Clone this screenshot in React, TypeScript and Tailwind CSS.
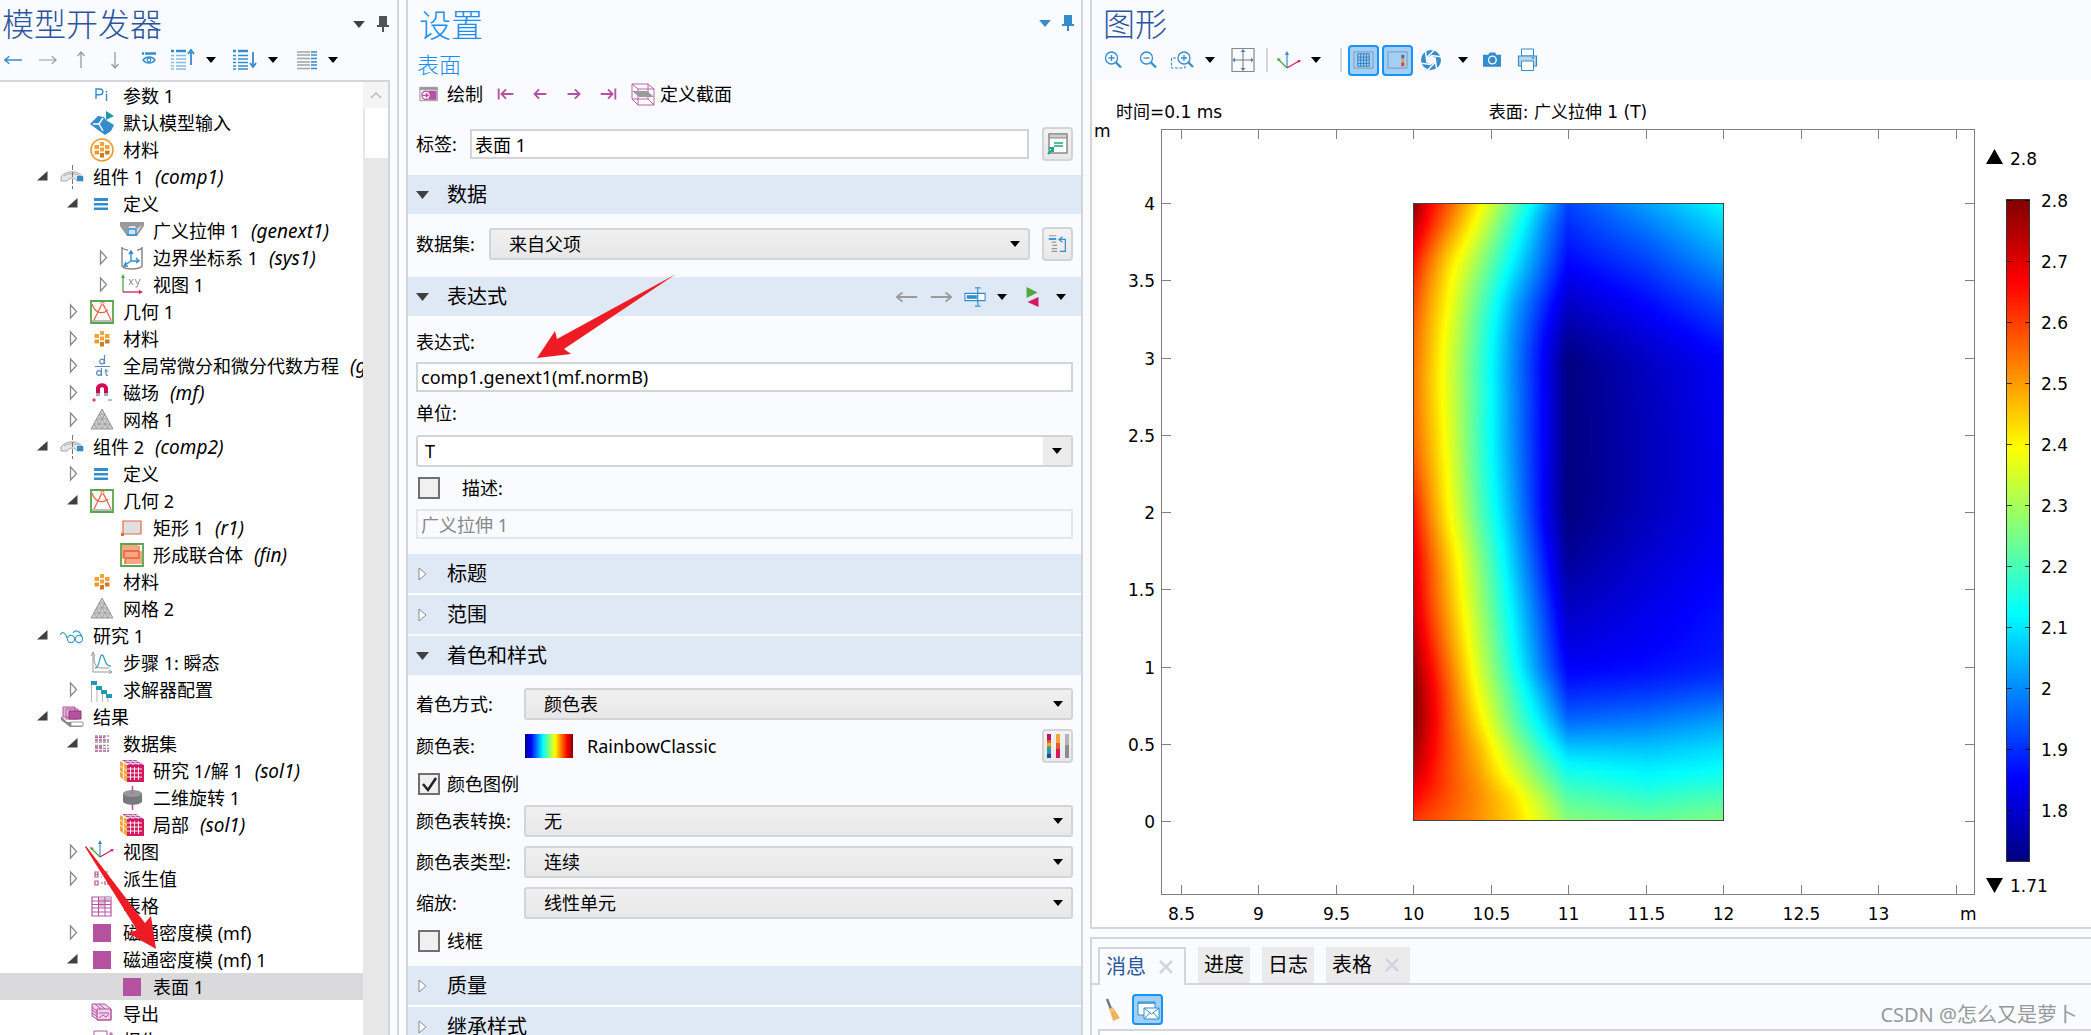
import { useState, type ReactNode } from "react";

type IconProps = { children: ReactNode; className?: string };

function Icon({ children, className = "size-6" }: IconProps) {
  return (
    <svg viewBox="0 0 24 24" fill="none" className={`shrink-0 ${className}`} aria-hidden>
      {children}
    </svg>
  );
}

const BLUE = "#338dcd";
const PURPLE = "#b5529f";
const PINK = "#d6185f";

function Caret({ color = "#000", large = false }: { color?: string; large?: boolean }) {
  return (
    <svg viewBox="0 0 10 6" className={large ? "h-[7px] w-3 shrink-0" : "h-[6px] w-[10px] shrink-0"} aria-hidden>
      <path d="M0 0h10L5 6z" fill={color} />
    </svg>
  );
}

function Pin({ color }: { color: string }) {
  return (
    <svg viewBox="0 0 12 16" className="h-4 w-3 shrink-0" aria-hidden>
      <path d="M2 0h8v9h2v2H7v5H5v-5H0V9h2z" fill={color} />
    </svg>
  );
}

// ---------- tree icons ----------

function MaterialDots() {
  return (
    <g>
      <path d="M4.500 7H9v4H4.500zM10 4h4v4h-4zM10 9.500h4v4h-4zM15 7h4.500v4H15z" fill="#f0a43a" />
      <path d="M4.500 12.500H9v4H4.500z" fill="#ee9b2e" />
      <path d="M10 15h4v4.500h-4zM15 12.500h4.500v4H15z" fill="#d07c1c" />
    </g>
  );
}

function Cube() {
  return (
    <>
      <path d="M0 2l7 4v17l-7-5z" fill="#f3a83f" />
      <path d="M0 7l7 5M0 12l7 5M3.500 4v16" stroke="#fff" strokeWidth=".8" />
      <path d="M2 1h14l8 5H9z" fill={PURPLE} />
      <path d="M5 2.500h14M7 4.500h14M7 1l7 5M12 1l7 5" stroke="#fff" strokeWidth=".6" />
      <path d="M7 6h17v17H7z" fill={PINK} />
      <path d="M7 10h15M7 14h15M7 18h15M10.500 8v13M14.500 8v13M18.500 8v13" stroke="#fff" strokeWidth=".9" />
    </>
  );
}

const TREE_ICONS: Record<string, ReactNode> = {
  params: (
    <>
      <path d="M6 15V5h4a2.800 2.800 0 0 1 0 5.700H6M16.500 10v7" stroke={BLUE} strokeWidth="1.400" />
      <path d="M15.700 7h1.600v1.600h-1.600z" fill={BLUE} />
    </>
  ),
  input: (
    <>
      <path d="M0 13l8-8 6 1 2 3 8 5-3 6-6 4-7-5z" fill={BLUE} />
      <path d="M3 13h6l4-6M9 13l4 7" stroke="#fff" strokeWidth="1.500" />
      <path d="M16 0l8 5-8 4z" fill="#1f9aa8" />
    </>
  ),
  materialRound: (
    <>
      <circle cx="12" cy="12" r="11" stroke="#ee9b2e" strokeWidth="1.600" />
      <MaterialDots />
    </>
  ),
  component: (
    <>
      <path d="M1 12c5-7 17-7 22 0v4h-6c-2-4-8-4-10 0H1z" fill="#e6e6e6" stroke="#aaa" />
      <path d="M4 11c4-3 12-3 16 0" stroke="#aaa" />
      <path d="M17 11h6v5h-6z" fill={BLUE} />
      <path d="M12.500 0v24" stroke="#777" strokeDasharray="5 2" />
    </>
  ),
  definitions: <path d="M4 6h14v3H4zM4 11h14v2.500H4zM4 15.500h14V18H4z" fill={BLUE} />,
  extrusion: (
    <>
      <path d="M0 3h24v4l-7 10H7L0 7z" fill="#9a9a9a" />
      <path d="M2 6l5 8v-4l3-3h5l2 3 5-4-5 8H7z" fill="#dfe3e6" />
      <path d="M8 10h8v6H8z" fill="#cfe4f5" stroke={BLUE} strokeWidth="1.400" />
    </>
  ),
  coords: (
    <>
      <path d="M2 1v19c3 4 17 4 20 0V1M2 2c3 2 6 2 6 2M22 2c-2 2-5 2-5 2" stroke="#8b8b8b" strokeWidth="1.500" />
      <path d="M11 6v9h8M11 15l-6 4M9 8l2-3 2 3M16 12l3 3-3 2M6 16l-2 4h4" stroke={BLUE} strokeWidth="1.400" />
    </>
  ),
  xy: (
    <>
      <path d="M3 19V4" stroke="#4aa44a" strokeWidth="1.300" />
      <path d="M1 5l2-4 2 4z" fill="#4aa44a" />
      <path d="M3 19h17" stroke={PINK} strokeWidth="1.300" />
      <path d="M19 17l4 2-4 2z" fill={PINK} />
      <path d="M9 6l4 6M13 6l-4 6M15 6l2.500 5M20 6l-3 8h-1.500" stroke="#8a8a8a" />
    </>
  ),
  geometry: (
    <>
      <path d="M1 1h22v22H1z" fill="#fff" stroke="#5aa54b" strokeWidth="1.800" />
      <path d="M2 21h20" stroke="#bbb" strokeWidth="2" />
      <path d="M4 20l8.500-17L21 20M2 4c3 9 10 11 16 6" stroke="#e2674a" strokeWidth="1.300" />
      <circle cx="12.500" cy="3.500" r="1.500" fill="#fff" stroke="#e2674a" />
    </>
  ),
  material: <MaterialDots />,
  ode: (
    <>
      <path d="M5 12.500h15" stroke="#5f8cba" />
      <circle cx="12" cy="7.500" r="2.300" stroke="#5f8cba" strokeWidth="1.200" />
      <circle cx="9" cy="19" r="2.300" stroke="#5f8cba" strokeWidth="1.200" />
      <path d="M14.500 1v9M11.500 14v8M16 15v5.500q0 1 2 1M14.500 17h4" stroke="#5f8cba" strokeWidth="1.200" />
    </>
  ),
  magnet: (
    <>
      <path d="M8 12V7a4.300 4.300 0 0 1 8 0v5" stroke="#d10a50" strokeWidth="4" />
      <path d="M6 12h4v3H6zM14 12h4v3h-4z" fill="#a8a8a8" />
      <path d="M2 19h4M4 17v4" stroke={PINK} />
      <path d="M18 19h4" stroke={BLUE} />
    </>
  ),
  mesh: (
    <>
      <path d="M12 1l11 20H1z" fill="#cdcdcd" stroke="#969696" />
      <path d="M9 6h6l-9 15M6 11h12l-6 10M4 16h16l-3 5M9 6l9 15M6 11l6 10M4 16l3 5M15 6l-3 5" stroke="#969696" strokeWidth=".7" />
    </>
  ),
  rect: (
    <>
      <path d="M3 5h18v13H3z" fill="#dde0de" stroke="#e8683c" strokeWidth="1.200" />
      <path d="M1 17h3v3H1z" fill="#e8683c" />
    </>
  ),
  union: (
    <>
      <path d="M1 1h22v22H1z" fill="#fff" stroke="#5aa54b" strokeWidth="1.800" />
      <path d="M2 2h16v14H2zM5 8h17v13H5z" fill="#f4a686" />
      <path d="M4 15V8h15M5 15h14V3M5 16v5" stroke="#e45f31" strokeWidth="1.300" />
    </>
  ),
  study: (
    <>
      <circle cx="11" cy="15" r="3.600" stroke="#39a3c2" strokeWidth="1.200" />
      <circle cx="19" cy="15" r="3.600" stroke="#39a3c2" strokeWidth="1.200" />
      <path d="M0 11c3-5 6-1 7 3M13 9c3-4 7-2 9 4" stroke="#39a3c2" strokeWidth="1.200" />
    </>
  ),
  transient: (
    <>
      <path d="M3 2v19h19M1 5l2-4 2 4M19 19l3 2-3 2M4 5c0 9 3 12 6 12h9" stroke="#999" />
      <path d="M5 17c5 0 4-13 7-13s2 12 9 11" stroke="#39a3c2" strokeWidth="1.300" />
    </>
  ),
  solver: (
    <>
      <path d="M1.500 5v19M7 8v16M12.500 12v12M18 16v8" stroke="#b5b5b5" />
      <path d="M1 3h6v4H1zM6 8h6v4H6zM11 12h6v4h-6zM16 16h6v4h-6z" fill="#1f9ab5" />
    </>
  ),
  results: (
    <>
      <path d="M1 11l6 6h15v5H10l-9-7z" fill="#888" />
      <path d="M11 17h12v4H11z" fill="#fff" stroke="#999" />
      <path d="M3 2h12v10H3zM6 4h12v10H6z" fill="#e3b9da" stroke={PURPLE} />
      <path d="M9 6h12v8H9z" fill={PURPLE} stroke="#8e3b7d" />
    </>
  ),
  datasets: (
    <>
      <path d="M5 4h14M5 10h14M5 13.500h14M5 16.500h14" stroke="#999" strokeWidth="1.500" strokeDasharray="3 1" />
      <path d="M5 5.500h10M5 8h14M5 15h7M5 19h14" stroke={PURPLE} strokeWidth="1.500" strokeDasharray="3 1" />
    </>
  ),
  cube: <Cube />,
  revolve: (
    <>
      <path d="M12.500 0v6M12.500 16v8" stroke={PURPLE} strokeWidth="1.500" />
      <path d="M3 7v8c0 5 19 5 19 0V7z" fill="#77797c" />
      <ellipse cx="12.500" cy="7.500" rx="9.500" ry="3.500" fill="#96989b" />
      <path d="M12.500 4v4" stroke={PURPLE} />
    </>
  ),
  axes: (
    <>
      <path d="M10 17V3" stroke={BLUE} strokeWidth="1.200" />
      <path d="M8 4l2-4 2 4z" fill={BLUE} />
      <path d="M10 17L2 9" stroke="#4aa44a" strokeWidth="1.200" />
      <path d="M0 7l4 1-3 2.500z" fill="#4aa44a" />
      <path d="M10 17l12-7" stroke={PINK} strokeWidth="1.200" />
      <path d="M24 9l-4 .5 2 2.500z" fill={PINK} />
    </>
  ),
  derived: (
    <path
      d="M5 5h3v5H5zM5 7.500h3M11 10h1M14 5h4M14 5v3h4v2M5 14h3v4H5zM11 16h2M15 14v4M18 14v4"
      stroke={PURPLE}
      strokeWidth="1.200"
    />
  ),
  table: (
    <>
      <path d="M2 3h19v19H2z" fill="#fff" stroke={PURPLE} strokeWidth="1.200" />
      <path d="M9 3h12v5H9zM9 8h6v5H9z" fill="#dfc0da" />
      <path d="M2 7h19M2 10.500h19M2 14h19M2 18h19M8.500 3v19M15 3v19" stroke={PURPLE} />
    </>
  ),
  surface: <path d="M3 3h18v18H3z" fill={PURPLE} />,
  export: (
    <>
      <path d="M2 2h13l6 5v11H8l-6-4z" fill="#ecd3e8" stroke={PURPLE} />
      <path d="M7 7h14v11H7zM2 5l6 5M2 8l6 4M2 11l6 4M5 2l6 5M9 2l6 5M9 11h10M9 16l4-3 3 2 3-3" stroke={PURPLE} />
    </>
  ),
  report: (
    <>
      <path d="M4 2h13v20H4z" fill="#fff" stroke={PURPLE} />
      <path d="M7 7h7M7 10h7M19 5h4M21 3v5" stroke={PURPLE} />
    </>
  ),
};

type TreeNode = {
  level: 1 | 2 | 3;
  icon: string;
  label: string;
  tag?: string;
  open?: boolean;
};

// `open` left out means the node is a leaf
const TREE: TreeNode[] = [
  { level: 2, icon: "params", label: "参数 1" },
  { level: 2, icon: "input", label: "默认模型输入" },
  { level: 2, icon: "materialRound", label: "材料" },
  { level: 1, icon: "component", label: "组件 1", tag: "(comp1)", open: true },
  { level: 2, icon: "definitions", label: "定义", open: true },
  { level: 3, icon: "extrusion", label: "广义拉伸 1", tag: "(genext1)" },
  { level: 3, icon: "coords", label: "边界坐标系 1", tag: "(sys1)", open: false },
  { level: 3, icon: "xy", label: "视图 1", open: false },
  { level: 2, icon: "geometry", label: "几何 1", open: false },
  { level: 2, icon: "material", label: "材料", open: false },
  { level: 2, icon: "ode", label: "全局常微分和微分代数方程", tag: "(ge)", open: false },
  { level: 2, icon: "magnet", label: "磁场", tag: "(mf)", open: false },
  { level: 2, icon: "mesh", label: "网格 1", open: false },
  { level: 1, icon: "component", label: "组件 2", tag: "(comp2)", open: true },
  { level: 2, icon: "definitions", label: "定义", open: false },
  { level: 2, icon: "geometry", label: "几何 2", open: true },
  { level: 3, icon: "rect", label: "矩形 1", tag: "(r1)" },
  { level: 3, icon: "union", label: "形成联合体", tag: "(fin)" },
  { level: 2, icon: "material", label: "材料" },
  { level: 2, icon: "mesh", label: "网格 2" },
  { level: 1, icon: "study", label: "研究 1", open: true },
  { level: 2, icon: "transient", label: "步骤 1: 瞬态" },
  { level: 2, icon: "solver", label: "求解器配置", open: false },
  { level: 1, icon: "results", label: "结果", open: true },
  { level: 2, icon: "datasets", label: "数据集", open: true },
  { level: 3, icon: "cube", label: "研究 1/解 1", tag: "(sol1)" },
  { level: 3, icon: "revolve", label: "二维旋转 1" },
  { level: 3, icon: "cube", label: "局部", tag: "(sol1)" },
  { level: 2, icon: "axes", label: "视图", open: false },
  { level: 2, icon: "derived", label: "派生值", open: false },
  { level: 2, icon: "table", label: "表格" },
  { level: 2, icon: "surface", label: "磁通密度模 (mf)", open: false },
  { level: 2, icon: "surface", label: "磁通密度模 (mf) 1", open: true },
  { level: 3, icon: "surface", label: "表面 1" },
  { level: 2, icon: "export", label: "导出" },
  { level: 2, icon: "report", label: "报告" },
];

const INDENT = { 1: "pl-[33px]", 2: "pl-[63px]", 3: "pl-[93px]" };

function Expander({ open }: { open?: boolean }) {
  return (
    <svg viewBox="0 0 18 18" className="size-[18px] shrink-0" aria-hidden>
      {open === true && <path d="M4 12.500h10.500V3z" fill="#404040" />}
      {open === false && <path d="M7.500 2v13l6-6.500z" fill="#fff" stroke="#8a8a8a" strokeWidth="1.300" />}
    </svg>
  );
}

function ModelTree() {
  const [selected, setSelected] = useState(33);
  return (
    <ul className="min-w-0 flex-1 overflow-hidden">
      {TREE.map((node, index) => (
        <li key={index}>
          <button
            type="button"
            onClick={() => setSelected(index)}
            className={`flex h-[27px] w-full items-center gap-[9px] text-left whitespace-nowrap ${INDENT[node.level]} ${
              index === selected ? "bg-[#dadadc]" : ""
            }`}
          >
            <Expander open={node.open} />
            <Icon>{TREE_ICONS[node.icon]}</Icon>
            <span>{node.label}</span>
            {node.tag && <span className="ml-0.5 text-[19px] italic">{node.tag}</span>}
          </button>
        </li>
      ))}
    </ul>
  );
}

function ListIcon({ up }: { up: boolean }) {
  return (
    <Icon>
      <path d="M0 3h3M5 3h10" stroke={BLUE} strokeWidth="2.500" />
      <path
        d="M0 7.500h3M5 7.500h10M0 11h3M5 11h10M0 14.500h3M5 14.500h10M0 18h3M5 18h10M0 21h3M5 21h10"
        stroke={up ? "#85bce2" : BLUE}
        strokeWidth="1.500"
      />
      <path d={up ? "M20 17V4M17 6l3-4 3 4" : "M20 4v13M17 15l3 4 3-4"} stroke={BLUE} strokeWidth="1.800" />
    </Icon>
  );
}

function ModelBuilder() {
  return (
    <section className="relative flex w-[399px] shrink-0 flex-col border-r-2 border-[#d3d5da] pr-[7px]">
      <header className="flex h-10 items-center justify-between pr-px pl-0.5">
        <h1 className="pt-2 text-[32px] leading-[36px] font-light text-[#2a55a0]">模型开发器</h1>
        <div className="flex items-center gap-3 pt-2">
          <Caret color="#404040" large />
          <Pin color="#505357" />
        </div>
      </header>
      <div className="flex h-10 items-center pl-1">
        <button type="button" aria-label="后退" className="mr-[17px]">
          <Icon className="size-[18px]"><path d="M1 12h23M7 7l-6 5 6 5" stroke={BLUE} strokeWidth="2" /></Icon>
        </button>
        <button type="button" aria-label="前进" className="mr-3">
          <Icon className="size-[18px]"><path d="M0 12h22M17 7l6 5-6 5" stroke="#9b9b9b" strokeWidth="1.500" /></Icon>
        </button>
        <button type="button" aria-label="上移" className="mr-[10px]">
          <Icon><path d="M12 20V4M8.500 8L12 4l3.500 4" stroke="#9b9b9b" strokeWidth="1.300" /></Icon>
        </button>
        <button type="button" aria-label="下移" className="mr-[10px]">
          <Icon><path d="M12 4v16M8.500 16l3.500 4 3.500-4" stroke="#9b9b9b" strokeWidth="1.300" /></Icon>
        </button>
        <button type="button" aria-label="显示" className="mr-[10px]">
          <Icon>
            <path d="M5 5.500h2M8 5.500h11" stroke={BLUE} strokeWidth="2.500" />
            <path d="M6 12c3-4 9-4 12 0-3 4-9 4-12 0z" stroke={BLUE} strokeWidth="1.300" />
            <circle cx="12" cy="12" r="1.800" stroke={BLUE} strokeWidth="1.300" />
          </Icon>
        </button>
        <button type="button" aria-label="折叠" className="mr-[17px] flex items-center gap-[11px]">
          <ListIcon up />
          <Caret />
        </button>
        <button type="button" aria-label="展开" className="mr-[18px] flex items-center gap-[11px]">
          <ListIcon up={false} />
          <Caret />
        </button>
        <button type="button" aria-label="节点文本" className="flex items-center gap-2">
          <Icon>
            <path d="M1 4h13M1 7h13M1 10.500h13M1 14h13M1 17h13M1 20.500h13" stroke="#a3a3a3" strokeWidth="1.300" />
            <path d="M15 4h6M15 7h6M15 10.500h6M15 14h6M15 17h6M15 20.500h6" stroke={BLUE} strokeWidth="1.500" />
          </Icon>
          <Caret />
        </button>
      </div>
      <div className="flex min-h-0 flex-1 overflow-hidden border-t-2 border-r-2 border-[#d3d5da] bg-white">
        <ModelTree />
        <div className="w-[25px] shrink-0 bg-[#e7e7e8]">
          <div className="flex h-[26px] items-center justify-center bg-[#f5f5f6]">
            <svg viewBox="0 0 12 8" className="h-2 w-3" aria-hidden>
              <path d="M1 7l5-5 5 5" fill="none" stroke="#bbb" strokeWidth="1.500" />
            </svg>
          </div>
          <div className="h-[50px] border-l-2 border-[#e7e7e8] bg-white" />
        </div>
      </div>
      <svg viewBox="0 0 72 104" className="pointer-events-none absolute top-[846px] left-[85px] h-[104px] w-[72px]" aria-hidden>
        <path d="M1 0l59 77 6-7 5 33-28-16 9-3L0 1z" fill="#ed1c24" />
      </svg>
    </section>
  );
}

// ---------- settings ----------

type SectionProps = { title: string; open?: boolean; children?: ReactNode; actions?: ReactNode };

function Section({ title, open = false, children, actions }: SectionProps) {
  return (
    <section>
      <div className="mb-0.5 flex h-[39px] items-center justify-between bg-[#dfe8f5] pr-[15px] pl-2">
        <button type="button" aria-expanded={open} className="flex items-center gap-[17px] text-xl leading-[26px]">
          <svg viewBox="0 0 14 14" className="h-[14px] w-[14px] shrink-0" aria-hidden>
            {open ? (
              <path d="M0 3h13l-6.500 8z" fill="#404040" />
            ) : (
              <path d="M3 1v12l7-6z" fill="#fff" stroke="#8a8a8a" />
            )}
          </svg>
          {title}
        </button>
        {actions}
      </div>
      {children}
    </section>
  );
}

function DropDown({ id, value }: { id: string; value: string }) {
  return (
    <div className="relative min-w-0 flex-1">
      <select
        id={id}
        defaultValue={value}
        className="block h-8 w-full appearance-none rounded-[3px] border-2 border-[#d3d4d6] bg-linear-to-b from-[#f0f0f1] to-[#e8e8e9] pl-[18px] leading-[26px]"
      >
        <option>{value}</option>
      </select>
      <span className="pointer-events-none absolute top-[13px] right-[10px] flex">
        <Caret />
      </span>
    </div>
  );
}

function FormRow({ id, label, value }: { id: string; label: string; value: string }) {
  return (
    <div className="mb-[9px] flex items-center">
      <label htmlFor={id} className="w-[108px] shrink-0">{label}</label>
      <DropDown id={id} value={value} />
    </div>
  );
}

function TickBox({ label, wide, checked = false }: { label: string; wide?: boolean; checked?: boolean }) {
  return (
    <label className={`relative flex h-[26px] items-center pl-0.5 ${wide ? "gap-[22px]" : "gap-[7px]"}`}>
      <input
        type="checkbox"
        defaultChecked={checked}
        className="peer size-[22px] appearance-none border-2 border-[#707070] bg-[#f0f0f0]"
      />
      <svg
        viewBox="0 0 22 22"
        className="pointer-events-none absolute top-0.5 left-0.5 hidden size-[22px] peer-checked:block"
        aria-hidden
      >
        <path d="M5 11l5 6 8-12" fill="none" stroke="#222" strokeWidth="2.500" />
      </svg>
      {label}
    </label>
  );
}

function SquareButton({ label, children }: { label: string; children: ReactNode }) {
  return (
    <button
      type="button"
      aria-label={label}
      className="flex h-[34px] w-[31px] shrink-0 items-center justify-center rounded-[4px] border-2 border-[#d3d4d6] bg-linear-to-b from-[#f3f3f4] to-[#e8e8e9]"
    >
      {children}
    </button>
  );
}

function Arrow({ label, d, color = PURPLE }: { label: string; d: string; color?: string }) {
  return (
    <button type="button" aria-label={label}>
      <Icon className="size-[22px]"><path d={d} stroke={color} strokeWidth="2" /></Icon>
    </button>
  );
}

const TEXT_BOX = "h-[30px] w-full min-w-0 border-2 border-[#d3d4d6] bg-white px-[3px]";

function Settings() {
  return (
    <section className="relative ml-[7px] w-[677px] shrink-0 overflow-hidden border-x-2 border-[#d3d5da]">
      <header className="flex h-[50px] items-center justify-between pr-[7px] pl-[11px]">
        <h2 className="text-[32px] leading-[36px] font-light text-[#1a8ff0]">设置</h2>
        <div className="flex items-center gap-[11px] pb-1">
          <Caret color={BLUE} large />
          <Pin color={BLUE} />
        </div>
      </header>
      <h3 className="pl-[9px] text-[22px] leading-[28px] font-light text-[#1a8ff0]">表面</h3>

      <div className="flex h-8 items-center pl-[11px]">
        <button type="button" className="mr-3 flex items-center gap-2">
          <Icon className="size-[20px]">
            <path d="M1 4h21v16H1z" fill="#f3e4f0" stroke="#8a8a8a" />
            <path d="M1 4h21v3H1z" fill="#999" />
            <path d="M12 8h9v11h-9z" fill={PURPLE} />
            <circle cx="8.500" cy="13.500" r="5" fill="#fff" stroke={PURPLE} strokeWidth="1.500" />
            <path d="M4 13.500h7M8 11l3 2.500L8 16" stroke={PURPLE} strokeWidth="1.500" />
          </Icon>
          绘制
        </button>
        <div className="mr-3 flex items-center gap-3">
          <Arrow label="第一个" d="M4 6v12M20 12H7M12 7l-5 5 5 5" />
          <Arrow label="上一个" d="M19 12H6M11 7l-5 5 5 5" />
          <Arrow label="下一个" d="M5 12h13M13 7l5 5-5 5" />
          <Arrow label="最后一个" d="M20 6v12M4 12h13M12 7l5 5-5 5" />
        </div>
        <button type="button" className="flex items-center gap-[5px]">
          <Icon>
            <path d="M1 2h16l6 5H7zM1 2v15l6 6h16V7M17 2v15l6 6M7 7v16M1 17h16" stroke={PURPLE} strokeWidth=".9" />
            <path d="M1 9h15l7 6H8z" fill="#9a9a9a" />
          </Icon>
          定义截面
        </button>
      </div>

      <div className="mt-[17px] mb-[14px] flex items-center pr-2 pl-2">
        <label htmlFor="tag" className="w-[54px] shrink-0">标签:</label>
        <input id="tag" defaultValue="表面 1" className={`${TEXT_BOX} mr-[13px]`} />
        <SquareButton label="重命名">
          <Icon>
            <path d="M3 2h18v19H3z" fill="#fff" stroke="#8a8a8a" strokeWidth="1.500" />
            <path d="M3 2h18v4H3z" fill="#ccc" stroke="#8a8a8a" />
            <path d="M8 11h9M8 14h9" stroke="#1fa78c" strokeWidth="1.500" />
            <path d="M2 22l5-5M3 16h4v4" stroke="#1fa78c" strokeWidth="2" />
          </Icon>
        </SquareButton>
      </div>

      <Section title="数据" open>
        <div className="flex items-center gap-3 px-2 pt-[11px] pb-4">
          <label htmlFor="dataset" className="w-[61px] shrink-0">数据集:</label>
          <DropDown id="dataset" value="来自父项" />
          <SquareButton label="转到源">
            <Icon className="size-[22px]">
              <path d="M2 3h8M5 10h5M5 17h6M5 20h6" stroke="#999" strokeWidth="1.300" />
              <path d="M2 6.500h8" stroke={BLUE} strokeWidth="2" />
              <path d="M6 13.500h5" stroke="#999" strokeWidth="1.500" />
              <path d="M14 20h6V7h-6M17 4l-4 3 4 3" stroke={BLUE} strokeWidth="1.300" />
            </Icon>
          </SquareButton>
        </div>
      </Section>

      <Section
        title="表达式"
        open
        actions={
          <div className="flex items-center gap-3">
            <Arrow label="后退" color="#9b9b9b" d="M23 12H1M7 7l-6 5 6 5" />
            <Arrow label="前进" color="#9b9b9b" d="M1 12h22M17 7l6 5-6 5" />
            <button type="button" aria-label="插入表达式" className="flex items-center gap-[11px]">
              <Icon className="size-[22px]">
                <path d="M1 8h22v8H1z" fill="#fff" stroke={BLUE} strokeWidth="1.200" />
                <path d="M3 10h11v4H3z" fill={BLUE} />
                <path d="M15 3v18M12 2h6M12 22h6" stroke={BLUE} strokeWidth="1.300" />
              </Icon>
              <Caret />
            </button>
            <button type="button" aria-label="替换表达式" className="ml-[3px] flex items-center gap-3">
              <Icon className="size-[22px]">
                <path d="M5 1l12 6-12 6z" fill="#4fa83d" />
                <path d="M18 12v11L6 17.500z" fill={PINK} />
              </Icon>
              <Caret />
            </button>
          </div>
        }
      >
        <div className="px-2 pt-[11px] pb-[15px]">
          <label htmlFor="expr" className="block leading-[26px]">表达式:</label>
          <input id="expr" defaultValue="comp1.genext1(mf.normB)" className={`${TEXT_BOX} mt-[7px] block`} />
          <label htmlFor="unit" className="mt-2 block leading-[26px]">单位:</label>
          <div className="relative mt-[9px] mb-2 flex">
            <input
              id="unit"
              defaultValue="T"
              className="h-8 w-full rounded-[3px] border-2 border-[#d3d4d6] bg-white px-[7px]"
            />
            <button
              type="button"
              aria-label="选择单位"
              className="absolute inset-y-0.5 right-0.5 flex w-7 items-center justify-center bg-[#ececed]"
            >
              <Caret />
            </button>
          </div>
          <TickBox label="描述:" wide />
          <input
            aria-label="描述"
            disabled
            defaultValue="广义拉伸 1"
            className="mt-2 block h-[30px] w-full border-2 border-[#e5e6ea] px-[3px] text-[#888]"
          />
        </div>
      </Section>

      <Section title="标题" />
      <Section title="范围" />

      <Section title="着色和样式" open>
        <div className="px-2 pt-[11px] pb-3">
          <FormRow id="coloring" label="着色方式:" value="颜色表" />
          <div className="mb-2 flex items-center">
            <span className="w-[109px] shrink-0">颜色表:</span>
            <span className="h-6 w-12 bg-[linear-gradient(90deg,#000080,#0000ff_12.5%,#00ffff_37.5%,#ffff00_62.5%,#ff0000_87.5%,#800000)]" />
            <span className="flex-1 pl-[14px]">RainbowClassic</span>
            <SquareButton label="选择颜色表">
              <Icon>
                <path d="M1 0h4v6H1z" fill="#c0155f" />
                <path d="M1 6h4v3H1z" fill="#ea5a26" />
                <path d="M1 9h4v3H1z" fill="#f2a33a" />
                <path d="M1 12h4v3H1z" fill="#53a83d" />
                <path d="M1 15h4v5H1z" fill={BLUE} />
                <path d="M1 20h4v4H1z" fill="#1a4f9c" />
                <path d="M10 0h4v9h-4z" fill="#f2a33a" />
                <path d="M10 9h4v6h-4z" fill="#ea5a26" />
                <path d="M10 15h4v9h-4z" fill={PINK} />
                <path d="M19 0h4v11h-4z" fill="#b5b5b5" />
                <path d="M19 11h4v13h-4z" fill="#8c8c8c" />
              </Icon>
            </SquareButton>
          </div>
          <TickBox label="颜色图例" checked />
          <div className="h-2" />
          <FormRow id="transform" label="颜色表转换:" value="无" />
          <FormRow id="tableType" label="颜色表类型:" value="连续" />
          <FormRow id="scale" label="缩放:" value="线性单元" />
          <TickBox label="线框" />
        </div>
      </Section>

      <Section title="质量" />
      <Section title="继承样式" />

      <svg viewBox="0 0 140 85" className="pointer-events-none absolute top-[274px] left-[128px] h-[85px] w-[140px]" aria-hidden>
        <path d="M140 0L28 75l7 5-34 4 18-27 2 8z" fill="#ed1c24" />
      </svg>
    </section>
  );
}

// ---------- graphics ----------

const STOPS: [number, [number, number, number]][] = [
  [0, [0, 0, 128]],
  [0.125, [0, 0, 255]],
  [0.375, [0, 255, 255]],
  [0.625, [255, 255, 0]],
  [0.875, [255, 0, 0]],
  [1, [128, 0, 0]],
];

function rainbow(t: number) {
  const v = Math.min(1, Math.max(0, t));
  let i = 0;
  while (i < STOPS.length - 2 && v > STOPS[i + 1][0]) i++;
  const [a, from] = STOPS[i];
  const [b, to] = STOPS[i + 1];
  const k = (v - a) / (b - a);
  return `rgb(${from.map((c, n) => Math.round(c + (to[n] - c) * k)).join(",")})`;
}

// Normalised field samples: columns along x, rows from the top edge down.
const FIELD_X = [0, 0.054, 0.108, 0.215, 0.323, 0.43, 0.5, 0.753, 1];
const FIELD: [number, number[]][] = [
  [0, [1.0, 0.875, 0.8, 0.64, 0.47, 0.3, 0.19, 0.285, 0.375]],
  [0.031, [0.95, 0.85, 0.765, 0.6, 0.43, 0.26, 0.17, 0.25, 0.34]],
  [0.099, [0.86, 0.76, 0.67, 0.52, 0.36, 0.215, 0.125, 0.185, 0.27]],
  [0.174, [0.8, 0.71, 0.63, 0.46, 0.29, 0.15, 0.06, 0.122, 0.19]],
  [0.25, [0.775, 0.69, 0.605, 0.435, 0.265, 0.11, 0.005, 0.07, 0.127]],
  [0.303, [0.77, 0.685, 0.605, 0.435, 0.265, 0.11, 0, 0.06, 0.118]],
  [0.405, [0.79, 0.705, 0.62, 0.435, 0.27, 0.11, 0, 0.055, 0.11]],
  [0.5, [0.86, 0.745, 0.645, 0.46, 0.29, 0.11, 0, 0.06, 0.11]],
  [0.575, [0.9, 0.79, 0.69, 0.505, 0.32, 0.14, 0.025, 0.08, 0.12]],
  [0.664, [0.93, 0.82, 0.725, 0.54, 0.36, 0.185, 0.07, 0.105, 0.14]],
  [0.75, [0.98, 0.875, 0.775, 0.58, 0.4, 0.225, 0.12, 0.135, 0.16]],
  [0.793, [1, 0.9, 0.8, 0.61, 0.44, 0.275, 0.165, 0.18, 0.21]],
  [0.841, [1, 0.905, 0.81, 0.65, 0.48, 0.335, 0.235, 0.25, 0.285]],
  [0.882, [0.97, 0.89, 0.815, 0.69, 0.54, 0.4, 0.32, 0.315, 0.34]],
  [0.916, [0.94, 0.87, 0.81, 0.71, 0.585, 0.46, 0.385, 0.36, 0.38]],
  [0.936, [0.91, 0.86, 0.81, 0.725, 0.615, 0.49, 0.415, 0.385, 0.405]],
  [0.963, [0.875, 0.835, 0.8, 0.735, 0.655, 0.54, 0.46, 0.425, 0.45]],
  [1, [0.82, 0.8, 0.78, 0.73, 0.67, 0.58, 0.51, 0.48, 0.5]],
];

function alongX(row: number[], x: number) {
  let i = 0;
  while (i < FIELD_X.length - 2 && x > FIELD_X[i + 1]) i++;
  const k = (x - FIELD_X[i]) / (FIELD_X[i + 1] - FIELD_X[i]);
  return row[i] + (row[i + 1] - row[i]) * k;
}

// cubic Hermite in y, linear in x
function field(x: number, y: number) {
  const last = FIELD.length - 1;
  let i = 0;
  while (i < last - 1 && y > FIELD[i + 1][0]) i++;
  const at = (n: number) => {
    const [rowY, row] = FIELD[Math.min(last, Math.max(0, n))];
    return { y: rowY, v: alongX(row, x) };
  };
  const p0 = at(i - 1);
  const p1 = at(i);
  const p2 = at(i + 1);
  const p3 = at(i + 2);
  const h = p2.y - p1.y;
  const m1 = ((p2.v - p0.v) / (p2.y - p0.y)) * h;
  const m2 = ((p3.v - p1.v) / (p3.y - p1.y)) * h;
  const t = (y - p1.y) / h;
  const t2 = t * t;
  const t3 = t2 * t;
  return (2 * t3 - 3 * t2 + 1) * p1.v + (t3 - 2 * t2 + t) * m1 + (3 * t2 - 2 * t3) * p2.v + (t3 - t2) * m2;
}

const STRIPS = 155;
const SAMPLES = 64;

function SurfaceMap() {
  return (
    <g shapeRendering="crispEdges">
      {Array.from({ length: STRIPS }, (_, s) => (
        <g key={s}>
          <linearGradient id={`strip${s}`} x1="0" y1="0" x2="0" y2="1">
            {Array.from({ length: SAMPLES + 1 }, (_, n) => (
              <stop key={n} offset={n / SAMPLES} stopColor={rainbow(field((s + 0.5) / STRIPS, n / SAMPLES))} />
            ))}
          </linearGradient>
          <rect x={1413 + s * 2} y={203} width={2} height={618} fill={`url(#strip${s})`} />
        </g>
      ))}
      <rect x="1413.500" y="203.500" width="310" height="617" fill="none" stroke="#444" />
    </g>
  );
}

const X_TICKS = [8.5, 9, 9.5, 10, 10.5, 11, 11.5, 12, 12.5, 13, 13.5];
const Y_TICKS = [0, 0.5, 1, 1.5, 2, 2.5, 3, 3.5, 4];
const BAR_TICKS = [2.8, 2.7, 2.6, 2.5, 2.4, 2.3, 2.2, 2.1, 2, 1.9, 1.8];

const px = (v: number) => Math.round(1413 + (v - 10) * 155) + 0.5;
const py = (v: number) => Math.round(821 - v * 154.500) + 0.5;
const pb = (v: number) => Math.round(200 + (2.8 - v) * 610) + 0.5;

function Plot() {
  return (
    <svg
      viewBox="1092 80 999 847"
      className="min-h-0 w-full flex-1 bg-white font-['DejaVu_Sans','Noto_Sans_CJK_SC',sans-serif] text-[17px]"
      role="img"
      aria-label="表面: 广义拉伸 1 (T)"
    >
      <text x="1116" y="118">时间=0.1 ms</text>
      <text x="1568" y="118" textAnchor="middle">表面: 广义拉伸 1 (T)</text>
      <text x="1094" y="137">m</text>
      <g stroke="#808080" fill="none" shapeRendering="crispEdges">
        <rect x="1161.500" y="129.500" width="813" height="765" />
        {X_TICKS.map((v) => (
          <path key={v} d={`M${px(v)} 130v9M${px(v)} 894v-9`} />
        ))}
        {Y_TICKS.map((v) => (
          <path key={v} d={`M1162 ${py(v)}h9M1974 ${py(v)}h-9`} />
        ))}
      </g>
      {X_TICKS.slice(0, -1).map((v) => (
        <text key={v} x={px(v)} y="920" textAnchor="middle">{v}</text>
      ))}
      <text x="1960" y="920">m</text>
      {Y_TICKS.map((v) => (
        <text key={v} x="1155" y={py(v) + 6} textAnchor="end">{v}</text>
      ))}
      <SurfaceMap />

      <linearGradient id="legend" x1="0" y1="1" x2="0" y2="0">
        {STOPS.map(([at]) => (
          <stop key={at} offset={at} stopColor={rainbow(at)} />
        ))}
      </linearGradient>
      <rect x="2006.500" y="199.500" width="23" height="662" fill="url(#legend)" stroke="#333" />
      {BAR_TICKS.map((v) => (
        <g key={v}>
          <path d={`M2007 ${pb(v)}h5M2025 ${pb(v)}h5`} stroke="#000" opacity=".7" />
          <text x="2041" y={pb(v) + 6}>{v}</text>
        </g>
      ))}
      <path d="M1986 164l8.500-15 8.500 15zM1986 878h17l-8.500 15z" fill="#000" />
      <text x="2010" y="165">2.8</text>
      <text x="2010" y="892">1.71</text>
    </svg>
  );
}

function Magnifier({ minus }: { minus?: boolean }) {
  return (
    <>
      <circle cx="10.500" cy="10" r="6" stroke={BLUE} strokeWidth="1.300" />
      <path d={minus ? "M7.500 10h6" : "M7.500 10h6M10.500 7v6"} stroke={BLUE} strokeWidth="1.300" />
      <path d="M15 14.500l5 5" stroke={BLUE} strokeWidth="2.300" />
    </>
  );
}

function ToolButton({ label, children }: { label: string; children: ReactNode }) {
  return (
    <button type="button" aria-label={label} className="flex shrink-0 items-center gap-[10px]">
      {children}
    </button>
  );
}

function ToggleButton({ label, children }: { label: string; children: ReactNode }) {
  return (
    <button
      type="button"
      aria-label={label}
      aria-pressed
      className="flex h-[31px] w-[31px] shrink-0 items-center justify-center rounded-[4px] border-2 border-[#1a94f4] bg-[#a0cff8]"
    >
      {children}
    </button>
  );
}

function GraphicsToolbar() {
  return (
    <div className="flex h-10 items-center pl-[9px]">
      <div className="flex items-center gap-[11px]">
        <ToolButton label="放大"><Icon><Magnifier /></Icon></ToolButton>
        <ToolButton label="缩小"><Icon><Magnifier minus /></Icon></ToolButton>
        <ToolButton label="框选缩放">
          <Icon>
            <circle cx="13" cy="10" r="6" stroke={BLUE} strokeWidth="1.300" />
            <path d="M10 10h6M13 7v6" stroke={BLUE} strokeWidth="1.300" />
            <path d="M17 14l5 5" stroke={BLUE} strokeWidth="2.300" />
            <path d="M5 10H0.500v10H14v-4" stroke={BLUE} strokeDasharray="3 1.500" />
          </Icon>
          <Caret />
        </ToolButton>
      </div>
      <div className="mr-[11px] ml-4 flex">
        <ToolButton label="缩放到窗口大小">
          <Icon>
            <path d="M1 0.500h22v23H1z" stroke="#888" strokeWidth="1.200" />
            <path d="M12 3v18M2 12h20" stroke="#777" />
            <path d="M9.500 4L12 1l2.500 3zM9.500 20l2.500 3 2.500-3zM4 9.500L1.500 12 4 14.500zM20 9.500l2.500 2.500-2.500 2.500z" fill="#4a80b8" />
          </Icon>
        </ToolButton>
      </div>
      <span className="h-6 w-0.5 bg-[#d3d5da]" />
      <div className="mr-[19px] ml-[9px] flex">
        <ToolButton label="视图">
          <Icon>
            <g transform="translate(0 3)">{TREE_ICONS.axes}</g>
          </Icon>
          <Caret />
        </ToolButton>
      </div>
      <span className="mr-[6px] h-6 w-0.5 bg-[#d3d5da]" />
      <div className="flex items-center gap-[3px]">
        <ToggleButton label="显示栅格">
          <Icon className="size-[23px]">
            <path d="M2 3h20v17H2z" stroke="#8299ad" />
            <path d="M6 5h12v13H6zM6 8.500h12M6 11.500h12M6 15h12M9 5v13M12 5v13M15 5v13" stroke="#2878b5" strokeWidth=".9" />
          </Icon>
        </ToggleButton>
        <ToggleButton label="显示图例">
          <Icon className="size-[23px]">
            <path d="M2 3h20v17H2z" stroke="#8299ad" />
            <path d="M16 6h3v4h-3z" fill="#4a6a9a" />
            <path d="M16 10h3v4h-3z" fill="#f2a33a" />
            <path d="M16 14h3v4h-3z" fill="#e0402a" />
          </Icon>
        </ToggleButton>
      </div>
      <div className="ml-2 flex items-center gap-[15px]">
        <button type="button" aria-label="场景光" className="flex items-center gap-[17px]">
          <Icon className="size-[20px]">
            <circle cx="12" cy="12" r="12" fill={BLUE} />
            <path d="M12 6.500l5 2.500v6L12 17.500 7 15V9z" fill="#fafbff" />
            <path d="M12 6.500L24 8M17 9l1.500 13M17 15l-9 9M12 17.500L0 16M7 15L5.500 2M7 9l9-9" stroke="#fafbff" strokeWidth="1.800" />
          </Icon>
          <Caret />
        </button>
        <ToolButton label="快照">
          <Icon className="size-[18px]">
            <path d="M0 5h7l2-3h7l2 3h6v16H0z" fill={BLUE} />
            <circle cx="12.500" cy="12" r="6" fill="#fafbff" />
            <circle cx="12.500" cy="12" r="4.200" fill={BLUE} />
          </Icon>
        </ToolButton>
        <ToolButton label="打印">
          <Icon>
            <path d="M5.500 1h12v7h-12z" fill="#fff" stroke={BLUE} />
            <path d="M2.500 8h18v10h-18z" fill="#bdd4e9" stroke={BLUE} strokeWidth="1.200" />
            <path d="M5.500 13h12v9.500h-12z" fill="#fff" stroke={BLUE} />
            <path d="M16 10h2" stroke={BLUE} strokeWidth="1.500" />
          </Icon>
        </ToolButton>
      </div>
    </div>
  );
}

const TABS = [
  { label: "进度", closable: false },
  { label: "日志", closable: false },
  { label: "表格", closable: true },
];

function Cross() {
  return (
    <svg viewBox="0 0 14 14" className="h-[14px] w-[14px] shrink-0" aria-hidden>
      <path d="M1 1l12 12M13 1L1 13" stroke="#cfd6e2" strokeWidth="2.500" />
    </svg>
  );
}

function Messages() {
  return (
    <section className="mt-2 flex h-[98px] shrink-0 flex-col overflow-hidden border-t-2 border-l-2 border-[#d3d5da]">
      <div className="flex h-[46px] shrink-0 items-end border-b-2 border-[#d3d5da] pl-[6px] text-xl leading-[26px]">
        <button
          type="button"
          className="relative z-10 -mb-0.5 flex h-[38px] items-center gap-[13px] border-2 border-b-0 border-[#d3d5da] bg-[#fafbff] pr-[11px] pl-[6px] text-[#2a55a0]"
        >
          消息
          <Cross />
        </button>
        <div className="ml-3 flex gap-3">
          {TABS.map((tab) => (
            <button
              key={tab.label}
              type="button"
              className={`flex h-9 items-center gap-[13px] bg-[#ebebeb] pl-[6px] ${tab.closable ? "pr-[11px]" : "pr-[6px]"}`}
            >
              {tab.label}
              {tab.closable && <Cross />}
            </button>
          ))}
        </div>
      </div>
      <div className="flex h-[44px] shrink-0 items-center gap-2 pt-[5px] pl-2">
        <button type="button" aria-label="清除">
          <Icon>
            <path d="M7 1l4 10" stroke="#777" strokeWidth="2.500" />
            <path d="M9 11l4-2 7 11-7 3z" fill="#f8c074" />
            <path d="M12 14l3 8M14 13l4 8" stroke="#e09a45" />
          </Icon>
        </button>
        <ToggleButton label="自动显示消息">
          <Icon>
            <path d="M2 4h17v13H2z" fill="#fff" stroke={BLUE} />
            <path d="M2 5h17" stroke={BLUE} strokeWidth="1.500" />
            <path d="M8 10h15v11H8z" fill="#fff" stroke={BLUE} />
            <path d="M8 10l7.500 6 7.500-6M8 21l5.500-6M23 21l-5.500-6" stroke={BLUE} />
          </Icon>
        </ToggleButton>
      </div>
      <div className="ml-[6px] h-3 border-t-2 border-l-2 border-[#d3d5da] bg-white" />
    </section>
  );
}

function Graphics() {
  return (
    <div className="ml-[7px] flex min-w-0 flex-1 flex-col">
      <section className="flex min-h-0 flex-1 flex-col border-b-2 border-l-2 border-[#d3d5da]">
        <h2 className="h-10 pt-[6px] pl-[11px] text-[32px] leading-[36px] font-light text-[#2a55a0]">图形</h2>
        <GraphicsToolbar />
        <Plot />
      </section>
      <Messages />
    </div>
  );
}

export default function App() {
  return (
    <main className="relative flex h-screen w-full overflow-hidden bg-[#fafbff] font-['Noto_Sans','Noto_Sans_CJK_SC',sans-serif] text-[18px] leading-[24px] text-black">
      <ModelBuilder />
      <Settings />
      <Graphics />
      <p className="pointer-events-none absolute right-[14px] bottom-[7px] text-xl leading-[26px] text-[#97999c]">
        CSDN @怎么又是萝卜
      </p>
    </main>
  );
}
